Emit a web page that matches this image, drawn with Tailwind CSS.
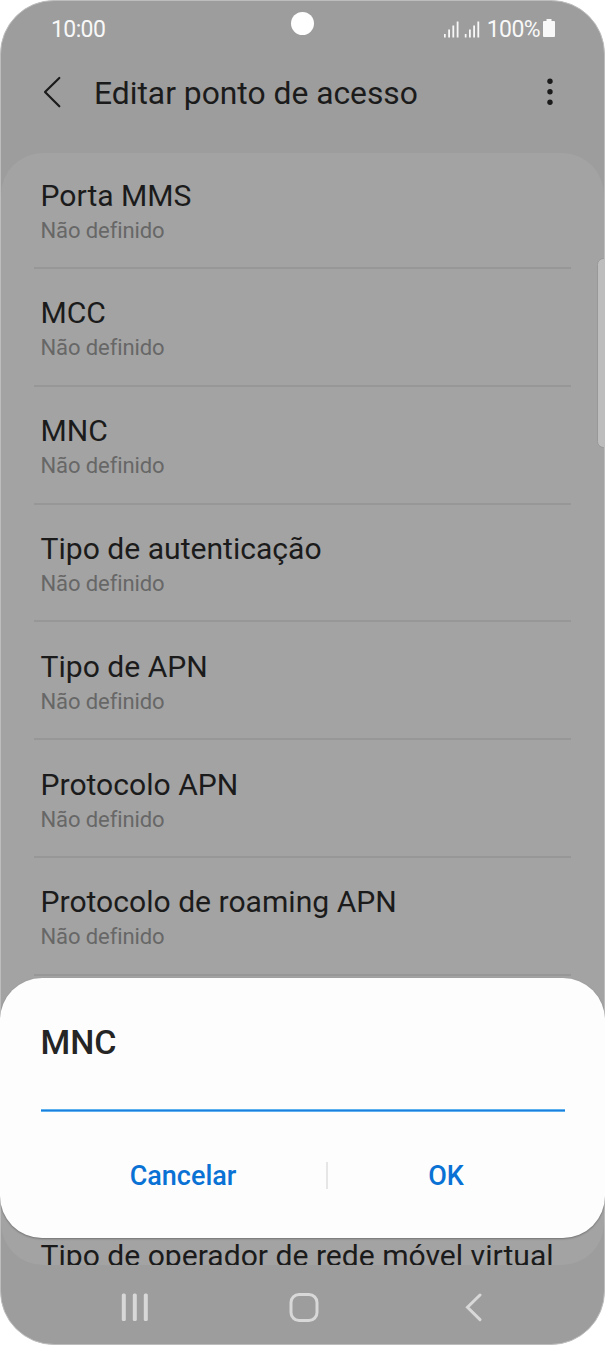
<!DOCTYPE html>
<html lang="pt">
<head>
<meta charset="utf-8">
<title>Editar ponto de acesso</title>
<script src="https://cdn.jsdelivr.net/npm/@tailwindcss/browser@4"></script>
</head>
<body class="bg-white font-[Roboto,sans-serif] text-[#1b1b1b]">
<div class="relative flex h-[1345px] w-[605px] flex-col overflow-hidden rounded-[54px] border border-[#bdbdbd] bg-[#9d9d9d]">
  <div class="flex h-[54px] items-center justify-between pt-[4px] pr-[49px] pl-[50px] text-[23px] leading-[28px] text-[#f8f8f8]">
    <span class="tracking-[-0.600px]">10:00</span>
    <div class="flex items-center">
      <svg width="37" height="18" class="mr-[6px] mb-[3px]" fill="#f8f8f8"><rect x="0" y="14" width="1.700" height="3.500"/><rect x="4.200" y="9.500" width="1.800" height="8"/><rect x="8.400" y="5.500" width="1.800" height="12"/><rect x="12.700" y="1.500" width="1.800" height="16"/><rect x="20.800" y="14" width="1.700" height="3.500"/><rect x="25" y="9.500" width="1.800" height="8"/><rect x="29.200" y="5.500" width="1.800" height="12"/><rect x="33.400" y="1.500" width="1.800" height="16"/></svg>
      <span class="tracking-[-0.600px]">100%</span>
      <svg width="12" height="18" class="mb-[4px] ml-[3px]" fill="#f8f8f8"><path d="M3.500 0h5v2H11q1 0 1 1v14q0 1-1 1H1q-1 0-1-1V3q0-1 1-1h2.500z"/></svg>
    </div>
  </div>
  <div class="absolute top-[11px] left-[290px] size-[23px] rounded-full bg-white"></div>
  <header class="flex h-[98px] items-start pt-[16px] pr-[49px] pl-[40px]">
    <svg width="24" height="40" class="mt-px" fill="none" stroke="#1b1b1b" stroke-width="2.200" stroke-linecap="round" stroke-linejoin="round"><path d="M18.300 6 4 20l14.300 14.300"/></svg>
    <h1 class="ml-[29px] text-[31.800px] leading-[44px]">Editar ponto de acesso</h1>
    <svg width="10" height="32" class="mt-[5px] ml-auto" fill="#1b1b1b"><circle cx="5" cy="5.300" r="2.700"/><circle cx="5" cy="15.800" r="2.700"/><circle cx="5" cy="26.300" r="2.700"/></svg>
  </header>
  <main class="h-[1112px] shrink-0 overflow-hidden rounded-[42px] bg-[#a3a3a3] px-[33px] text-[30.100px] leading-[40px]">
    <div class="h-[116px] border-b-2 border-[#979797] px-[6.500px] pt-[22.500px]"><div>Porta MMS</div><div class="text-[22px] leading-[30px] tracking-[-0.100px] text-[#676767]">Não definido</div></div>
    <div class="h-[117.830px] border-b-2 border-[#979797] px-[6.500px] pt-[24.300px]"><div>MCC</div><div class="text-[22px] leading-[30px] tracking-[-0.100px] text-[#676767]">Não definido</div></div>
    <div class="h-[117.830px] border-b-2 border-[#979797] px-[6.500px] pt-[24.300px]"><div>MNC</div><div class="text-[22px] leading-[30px] tracking-[-0.100px] text-[#676767]">Não definido</div></div>
    <div class="h-[117.830px] border-b-2 border-[#979797] px-[6.500px] pt-[24.300px]"><div>Tipo de autenticação</div><div class="text-[22px] leading-[30px] tracking-[-0.100px] text-[#676767]">Não definido</div></div>
    <div class="h-[117.830px] border-b-2 border-[#979797] px-[6.500px] pt-[24.300px]"><div>Tipo de APN</div><div class="text-[22px] leading-[30px] tracking-[-0.100px] text-[#676767]">Não definido</div></div>
    <div class="h-[117.830px] border-b-2 border-[#979797] px-[6.500px] pt-[24.300px]"><div>Protocolo APN</div><div class="text-[22px] leading-[30px] tracking-[-0.100px] text-[#676767]">Não definido</div></div>
    <div class="h-[117.830px] border-b-2 border-[#979797] px-[6.500px] pt-[24.300px]"><div>Protocolo de roaming APN</div><div class="text-[22px] leading-[30px] tracking-[-0.100px] text-[#676767]">Não definido</div></div>
    <div class="px-[6.500px] pt-[260px] whitespace-nowrap">Tipo de operador de rede móvel virtual</div>
  </main>
  <nav class="flex h-[79px] items-start pt-[28px] pl-[120px]">
    <svg width="28" height="30" fill="#d8d8d8"><rect x="0.800" y="0.500" width="4" height="27.500" rx="1.500"/><rect x="11.800" y="0.500" width="4" height="27.500" rx="1.500"/><rect x="22.800" y="0.500" width="4" height="27.500" rx="1.500"/></svg>
    <svg width="30" height="30" class="ml-[140px]" fill="none" stroke="#d8d8d8" stroke-width="3"><rect x="2" y="1.500" width="26" height="26" rx="8"/></svg>
    <svg width="20" height="30" class="ml-[146px]" fill="none" stroke="#d8d8d8" stroke-width="3" stroke-linecap="round"><path d="M15 2 2.500 14.300 15 26.600"/></svg>
  </nav>
  <div class="absolute top-[257px] -right-[6px] h-[190px] w-[13px] rounded-[7px] border border-[#989898] bg-[#bdbdbd]"></div>
</div>
<section class="absolute top-[977.500px] left-0 flex h-[260.500px] w-[605px] flex-col rounded-[42px] bg-[#fdfdfd] px-[40.500px] pt-[43.500px] shadow-[0_1px_2px_rgba(0,0,0,0.3)]">
  <h2 class="text-[34px] leading-[42px] font-medium text-[#252525]">MNC</h2>
  <div class="mt-[45.500px] h-[3px] w-[524px] border-y border-[#5fb0ee] bg-[#1b7fdc]"></div>
  <div class="mt-[46.500px] flex items-center text-[27px] leading-[36px] font-medium text-[#0a72d4]">
    <button class="w-[285px] text-center">Cancelar</button>
    <div class="mb-[2px] h-[27px] w-[2px] bg-[#e6e6e6]"></div>
    <button class="w-[237px] text-center">OK</button>
  </div>
</section>
</body>
</html>
